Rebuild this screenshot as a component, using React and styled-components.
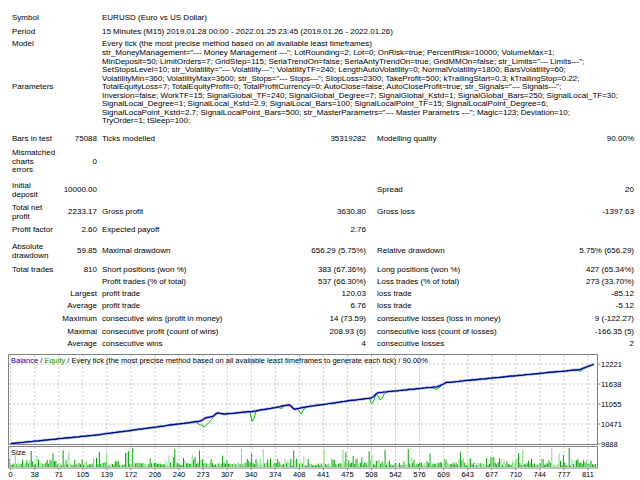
import React from "react";
import styled, { createGlobalStyle } from "styled-components";

const Global = createGlobalStyle`
  html, body { margin: 0; padding: 0; background: #fff; }
  body { font-family: "Liberation Sans", Arial, sans-serif; font-size: 8px; color: #000; }
`;

const Page = styled.div`
  width: 640px;
  height: 480px;
  overflow: hidden;
  padding-top: 14px;
  box-sizing: border-box;
`;

const Row = styled.div`
  display: grid;
  grid-template-columns: 50px 35px 5px 204px 60px 11px 197px 60px;
  padding-left: 12px;
  margin-top: ${(p) => p.$mt || 0}px;
  line-height: 8.5px;
  white-space: nowrap;
  align-items: center;
`;

const Label = styled.div`
  grid-column: 1;
`;
const Val = styled.div`
  grid-column: ${(p) => p.$col};
  text-align: right;
`;
const Txt = styled.div`
  grid-column: ${(p) => p.$col};
`;
const Wide = styled.div`
  grid-column: 4 / 9;
`;
const Sub = styled.div`
  grid-column: 1 / 3;
  text-align: right;
`;

const ChartWrap = styled.div`
  margin-top: 5px;
  margin-left: 8px;
`;

const params = [
  'str_MoneyManagement="--- Money Management ---"; LotRounding=2; Lot=0; OnRisk=true; PercentRisk=10000; VolumeMax=1;',
  'MinDeposit=50; LimitOrders=7; GridStep=115; SeriaTrendOn=false; SeriaAntyTrendOn=true; GridMMOn=false; str_Limits="--- Limits---";',
  'SetStopsLevel=10; str_Volatility="--- Volatility---"; VolatilityTF=240; LengthAutoVolatility=0; NormalVolatility=1800; BarsVolatility=60;',
  'VolatilityMin=360; VolatilityMax=3600; str_Stops="--- Stops---"; StopLoss=2300; TakeProfit=500; kTrailingStart=0.3; kTrailingStop=0.22;',
  'TotalEquityLoss=7; TotalEquityProfit=0; TotalProfitCurrency=0; AutoClose=false; AutoCloseProfit=true; str_Signals="--- Signals---";',
  "Inversion=false; WorkTF=15; SignalGlobal_TF=240; SignalGlobal_Degree=7; SignalGlobal_Kstd=1; SignalGlobal_Bars=250; SignalLocal_TF=30;",
  "SignalLocal_Degree=1; SignalLocal_Kstd=2.9; SignalLocal_Bars=100; SignalLocalPoint_TF=15; SignalLocalPoint_Degree=6;",
  'SignalLocaPoint_Kstd=2.7; SignalLocalPoint_Bars=500; str_MasterParametrs="--- Master Parametrs ---"; Magic=123; Deviation=10;',
  "TryOrder=1; tSleep=100;",
];

function rng(seed) {
  let s = seed;
  return () => {
    s = (s * 9301 + 49297) % 233280;
    return s / 233280;
  };
}

const keys = [
  [0, 9900], [120, 10150], [268, 10560], [272, 10640], [285, 10700], [290, 10800],
  [300, 10760], [340, 10840], [374, 10960], [392, 11040], [398, 10900], [412, 10960],
  [475, 11150], [508, 11230], [515, 11380], [600, 11560], [612, 11680], [700, 11860],
  [800, 12060], [820, 12221],
];
const dips = [
  [272, 10380, 14], [340, 10450, 4], [380, 10900, 4], [408, 10760, 5],
  [508, 11000, 4], [520, 11130, 6], [598, 11480, 8], [800, 12000, 6],
];

function balanceAt(i) {
  for (let k = 1; k < keys.length; k++) {
    if (i <= keys[k][0]) {
      const [a, va] = keys[k - 1];
      const [b, vb] = keys[k];
      return va + ((i - a) / (b - a)) * (vb - va);
    }
  }
  return 12221;
}

const X = (i) => 2.7 + i * 0.7117;
const Y = (v) => 90 - ((v - 9888) / 2333) * 80;

function Chart() {
  const r = rng(7);
  const bal = [];
  const eq = [];
  for (let i = 0; i <= 820; i += 3) {
    const b = balanceAt(i) + (r() - 0.5) * 8;
    bal.push(`${X(i).toFixed(1)},${Y(b).toFixed(1)}`);
    let e = b;
    for (const [c, v, w] of dips) {
      if (Math.abs(i - c) <= w) e = Math.min(e, v + (Math.abs(i - c) / w) * (b - v));
    }
    eq.push(`${X(i).toFixed(1)},${Y(e).toFixed(1)}`);
  }
  const r2 = rng(11);
  const bars = [];
  for (let x = 1.5; x < 588; x += 1.45) {
    const t = r2();
    let h = t < 0.55 ? 1.5 + r2() * 3 : t < 0.85 ? 3 + r2() * 6 : 6 + r2() * 13;
    const light = r2() < 0.35;
    bars.push(
      <line key={x} x1={x} x2={x} y1={113} y2={113 - h} stroke={light ? "#7cdc7c" : "#00a800"} strokeWidth="1" />
    );
  }
  const xl = [0, 38, 71, 105, 139, 172, 206, 240, 273, 307, 340, 374, 408, 441, 475, 508, 542, 576, 609, 643, 677, 710, 744, 777, 811];
  const yl = [["12221", 10], ["11638", 30], ["11055", 50], ["10471", 70], ["9888", 90]];
  return (
    <svg width="632" height="127" style={{ display: "block" }} fontFamily="Liberation Sans, Arial, sans-serif" fontSize="7.5">
      {xl.map((_, k) => (
        <g key={k}>
          <line x1={2.7 + k * 24.05} x2={2.7 + k * 24.05} y1={1} y2={90} stroke="#c8c8c8" strokeDasharray="2 2" />
          <line x1={2.7 + k * 24.05} x2={2.7 + k * 24.05} y1={93} y2={113} stroke="#c8c8c8" strokeDasharray="2 2" />
        </g>
      ))}
      {yl.slice(0, 4).map(([, y]) => (
        <line key={y} x1={1} x2={589} y1={y} y2={y} stroke="#c8c8c8" strokeDasharray="2 2" />
      ))}
      <rect x="0.5" y="0.5" width="589" height="90" fill="none" stroke="#808080" />
      <rect x="0.5" y="92.5" width="589" height="21.5" fill="none" stroke="#808080" />
      <text x="3" y="9">
        <tspan fill="#0000b0">Balance</tspan> / <tspan fill="#00a000">Equity</tspan> / Every tick (the most precise method based on all available least timeframes to generate each tick) / 90.00%
      </text>
      <text x="3" y="101">Size</text>
      {bars}
      <polyline points={bal.join(" ")} fill="none" stroke="#a8a8f0" strokeWidth="2.6" />
      <polyline points={eq.join(" ")} fill="none" stroke="#00c000" strokeWidth="1" />
      <polyline points={bal.join(" ")} fill="none" stroke="#0000a0" strokeWidth="1.2" />
      {yl.map(([t, y]) => (
        <g key={t}>
          <line x1={589} x2={592} y1={y} y2={y} stroke="#808080" />
          <text x={593} y={y + 2.7}>{t}</text>
        </g>
      ))}
      {xl.map((t, k) => (
        <g key={t}>
          <line x1={2.7 + k * 24.05} x2={2.7 + k * 24.05} y1={114} y2={116} stroke="#808080" />
          <text x={2.7 + k * 24.05} y={123} textAnchor="middle">{t}</text>
        </g>
      ))}
    </svg>
  );
}

export default function App() {
  return (
    <Page>
      <Global />
      <Row><Label>Symbol</Label><Wide>EURUSD (Euro vs US Dollar)</Wide></Row>
      <Row $mt={5.5}><Label>Period</Label><Wide>15 Minutes (M15) 2019.01.28 00:00 - 2022.01.25 23:45 (2019.01.26 - 2022.01.26)</Wide></Row>
      <Row $mt={3.5}><Label>Model</Label><Wide>Every tick (the most precise method based on all available least timeframes)</Wide></Row>
      <Row $mt={0.5}>
        <Label>Parameters</Label>
        <Wide>{params.map((p, i) => <div key={i}>{p}</div>)}</Wide>
      </Row>
      <Row $mt={9.5}>
        <Label>Bars in test</Label><Val $col={2}>75088</Val><Txt $col={4}>Ticks modelled</Txt>
        <Val $col={5}>35319282</Val><Txt $col={7}>Modelling quality</Txt><Val $col={8}>90.00%</Val>
      </Row>
      <Row $mt={5.5}><Label>Mismatched<br />charts<br />errors</Label><Val $col={2}>0</Val></Row>
      <Row $mt={7.5}>
        <Label>Initial<br />deposit</Label><Val $col={2}>10000.00</Val>
        <Txt $col={7}>Spread</Txt><Val $col={8}>20</Val>
      </Row>
      <Row $mt={5}>
        <Label>Total net<br />profit</Label><Val $col={2}>2233.17</Val><Txt $col={4}>Gross profit</Txt>
        <Val $col={5}>3630.80</Val><Txt $col={7}>Gross loss</Txt><Val $col={8}>-1397.63</Val>
      </Row>
      <Row $mt={5}>
        <Label>Profit factor</Label><Val $col={2}>2.60</Val><Txt $col={4}>Expected payoff</Txt><Val $col={5}>2.76</Val>
      </Row>
      <Row $mt={8.5}>
        <Label>Absolute<br />drawdown</Label><Val $col={2}>59.85</Val><Txt $col={4}>Maximal drawdown</Txt>
        <Val $col={5}>656.29 (5.75%)</Val><Txt $col={7}>Relative drawdown</Txt><Val $col={8}>5.75% (656.29)</Val>
      </Row>
      <Row $mt={6}>
        <Label>Total trades</Label><Val $col={2}>810</Val><Txt $col={4}>Short positions (won %)</Txt>
        <Val $col={5}>383 (67.36%)</Val><Txt $col={7}>Long positions (won %)</Txt><Val $col={8}>427 (65.34%)</Val>
      </Row>
      <Row $mt={3.5}>
        <Txt $col={4}>Profit trades (% of total)</Txt><Val $col={5}>537 (66.30%)</Val>
        <Txt $col={7}>Loss trades (% of total)</Txt><Val $col={8}>273 (33.70%)</Val>
      </Row>
      <Row $mt={3.5}>
        <Sub>Largest</Sub><Txt $col={4}>profit trade</Txt><Val $col={5}>120.03</Val>
        <Txt $col={7}>loss trade</Txt><Val $col={8}>-85.12</Val>
      </Row>
      <Row $mt={3.5}>
        <Sub>Average</Sub><Txt $col={4}>profit trade</Txt><Val $col={5}>6.76</Val>
        <Txt $col={7}>loss trade</Txt><Val $col={8}>-5.12</Val>
      </Row>
      <Row $mt={4.5}>
        <Sub>Maximum</Sub><Txt $col={4}>consecutive wins (profit in money)</Txt><Val $col={5}>14 (73.59)</Val>
        <Txt $col={7}>consecutive losses (loss in money)</Txt><Val $col={8}>9 (-122.27)</Val>
      </Row>
      <Row $mt={4.5}>
        <Sub>Maximal</Sub><Txt $col={4}>consecutive profit (count of wins)</Txt><Val $col={5}>208.93 (6)</Val>
        <Txt $col={7}>consecutive loss (count of losses)</Txt><Val $col={8}>-166.35 (5)</Val>
      </Row>
      <Row $mt={3.5}>
        <Sub>Average</Sub><Txt $col={4}>consecutive wins</Txt><Val $col={5}>4</Val>
        <Txt $col={7}>consecutive losses</Txt><Val $col={8}>2</Val>
      </Row>
      <ChartWrap><Chart /></ChartWrap>
    </Page>
  );
}
